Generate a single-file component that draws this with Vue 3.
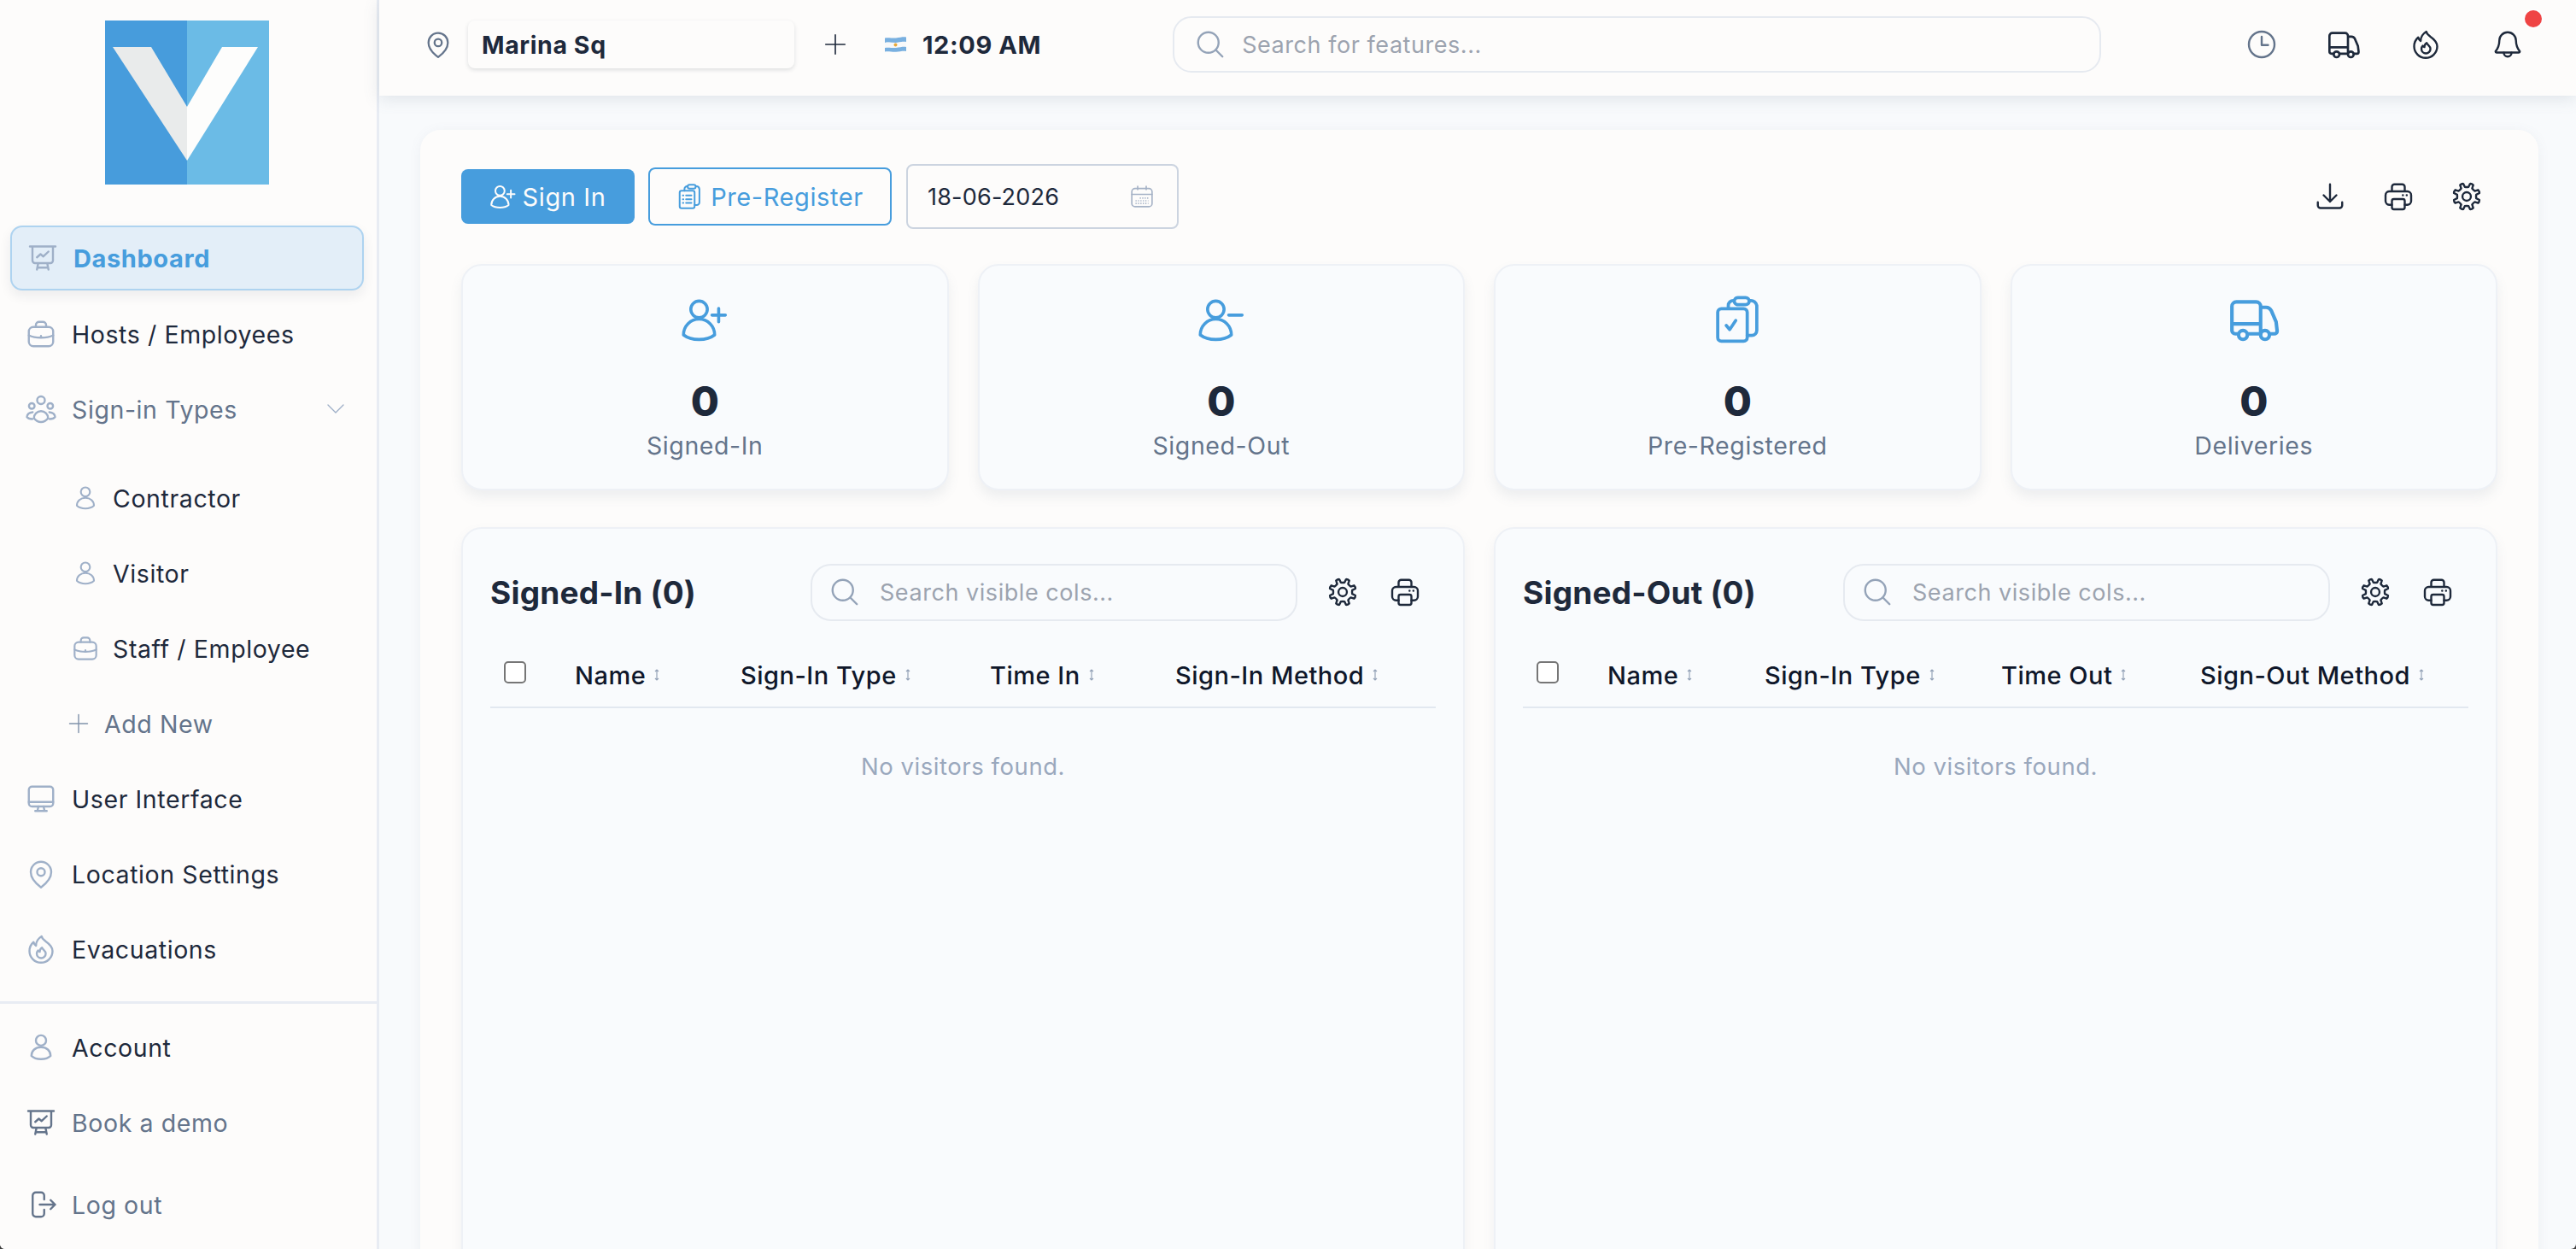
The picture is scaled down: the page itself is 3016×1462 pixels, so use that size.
<template>
  <div class="app">
    <!-- sidebar -->
    <aside class="sidebar">
      <div class="logo-wrap">
        <svg class="logo" viewBox="0 0 192 192">
          <rect width="96" height="192" fill="#479cdc" />
          <rect x="96" width="96" height="192" fill="#6bbbe6" />
          <polygon points="9,31 54,31 96,101 96,164" fill="#e9ebeb" />
          <polygon points="96,101 137,31 179,31 96,164" fill="#fdfdfc" />
        </svg>
      </div>

      <nav class="nav">
        <a class="nav-item active">
          <svg class="ico" viewBox="0 0 24 24" v-html="icons.board"></svg>
          <span>Dashboard</span>
        </a>
        <a class="nav-item">
          <svg class="ico" viewBox="0 0 24 24" v-html="icons.case"></svg>
          <span>Hosts / Employees</span>
        </a>
        <a class="nav-item muted">
          <svg class="ico" viewBox="0 0 24 24" v-html="icons.group"></svg>
          <span>Sign-in Types</span>
          <svg class="chev" viewBox="0 0 24 24" v-html="icons.chevron"></svg>
        </a>

        <div class="sub-list">
          <a v-for="s in subItems" :key="s.label" class="nav-item sub">
            <svg class="ico small" viewBox="0 0 24 24" v-html="icons[s.icon]"></svg>
            <span>{{ s.label }}</span>
          </a>
          <a class="nav-item add-new">
            <svg class="ico small plain" viewBox="0 0 24 24" v-html="icons.plus"></svg>
            <span>Add New</span>
          </a>
        </div>

        <a v-for="n in mainItems" :key="n.label" class="nav-item">
          <svg class="ico" viewBox="0 0 24 24" v-html="icons[n.icon]"></svg>
          <span>{{ n.label }}</span>
        </a>
      </nav>

      <div class="nav-bottom">
        <a class="nav-item">
          <svg class="ico" viewBox="0 0 24 24" v-html="icons.person"></svg>
          <span>Account</span>
        </a>
        <a class="nav-item muted dark-ico">
          <svg class="ico" viewBox="0 0 24 24" v-html="icons.board"></svg>
          <span>Book a demo</span>
        </a>
        <a class="nav-item muted dark-ico logout">
          <svg class="ico" viewBox="0 0 24 24" v-html="icons.logout"></svg>
          <span>Log out</span>
        </a>
      </div>
    </aside>

    <div class="content">
      <!-- top bar -->
      <header class="topbar">
        <svg class="ico pin" viewBox="0 0 24 24" v-html="icons.pin"></svg>
        <div class="loc-select">Marina Sq</div>
        <svg class="ico add" viewBox="0 0 24 24" v-html="icons.plus"></svg>
        <svg class="flag" viewBox="0 0 25 18">
          <path d="M0 1.500C5 .5 8 2 13 1.500S21 0 25 .5V6C21 5.500 17 7 13 7S5 6 0 7z" fill="#79b0e0" />
          <path d="M0 7C5 6 8 7.500 13 7s8-1.500 12-1v6c-4-.5-8 1-12 1.500S5 12 0 13z" fill="#f8f9fa" />
          <path d="M0 13c5-1 8 .5 13 0s8-1.500 12-1v5c-4-.5-8 .5-12 .8S5 17 0 17.500z" fill="#79b0e0" />
          <circle cx="12.500" cy="9.500" r="2" fill="#eaa93a" />
        </svg>
        <span class="clock-text">12:09 AM</span>
        <label class="global-search">
          <svg class="ico" viewBox="0 0 24 24" v-html="icons.search"></svg>
          <input type="text" placeholder="Search for features..." />
        </label>
        <div class="top-actions">
          <button class="icon-btn slate"><svg class="ico" viewBox="0 0 24 24" v-html="icons.clock"></svg></button>
          <button class="icon-btn"><svg class="ico truck" viewBox="0 0 24 24" v-html="icons.truck"></svg></button>
          <button class="icon-btn"><svg class="ico" viewBox="0 0 24 24" v-html="icons.flame"></svg></button>
          <button class="icon-btn bell">
            <svg class="ico" viewBox="0 0 24 24" v-html="icons.bell"></svg>
            <span class="badge"></span>
          </button>
        </div>
      </header>

      <main class="main">
        <section class="card">
          <div class="toolbar">
            <button class="btn primary">
              <svg class="ico" viewBox="0 0 24 24" v-html="icons.personPlus"></svg>
              Sign In
            </button>
            <button class="btn outline">
              <svg class="ico" viewBox="0 0 24 24" v-html="icons.clipList"></svg>
              Pre-Register
            </button>
            <div class="date-field">
              <span>18-06-2026</span>
              <svg class="ico" viewBox="0 0 24 24" v-html="icons.calendar"></svg>
            </div>
            <div class="tool-actions">
              <button class="icon-btn"><svg class="ico" viewBox="0 0 24 24" v-html="icons.download"></svg></button>
              <button class="icon-btn"><svg class="ico" viewBox="0 0 24 24" v-html="icons.printer"></svg></button>
              <button class="icon-btn"><svg class="ico" viewBox="0 0 24 24" v-html="icons.gear"></svg></button>
            </div>
          </div>

          <div class="stats">
            <div v-for="s in stats" :key="s.label" class="stat">
              <svg class="ico" :class="s.icon" viewBox="0 0 24 24" v-html="icons[s.icon]"></svg>
              <div class="stat-num">0</div>
              <div class="stat-label">{{ s.label }}</div>
            </div>
          </div>

          <div class="panels">
            <div v-for="p in panels" :key="p.title" class="panel">
              <div class="panel-head">
                <h2>{{ p.title }}</h2>
                <label class="col-search">
                  <svg class="ico" viewBox="0 0 24 24" v-html="icons.search"></svg>
                  <input type="text" placeholder="Search visible cols..." />
                </label>
                <button class="icon-btn"><svg class="ico" viewBox="0 0 24 24" v-html="icons.gear"></svg></button>
                <button class="icon-btn"><svg class="ico" viewBox="0 0 24 24" v-html="icons.printer"></svg></button>
              </div>
              <div class="thead" :class="p.cols">
                <div class="check-cell"><input type="checkbox" /></div>
                <div v-for="c in p.columns" :key="c" class="th">
                  {{ c }}
                  <svg class="sort" viewBox="0 0 10 16">
                    <path d="M5 2v12M3 4l2-2 2 2M3 12l2 2 2-2" />
                  </svg>
                </div>
              </div>
              <div class="empty">No visitors found.</div>
            </div>
          </div>
        </section>
      </main>
    </div>
  </div>
</template>

<script setup>
// gear outline with 8 rounded teeth
const gearPath = () => {
  const pt = (r, a) => `${(12 + r * Math.cos(a)).toFixed(2)} ${(12 + r * Math.sin(a)).toFixed(2)}`
  let d = ''
  for (let i = 0; i < 8; i++) {
    const a = (i * Math.PI) / 4 + Math.PI / 8
    const next = a + Math.PI / 4
    d += `${i ? 'L' : 'M'}${pt(7.6, a - 0.2)} L${pt(10.3, a - 0.13)} Q${pt(10.8, a)} ${pt(10.3, a + 0.13)} L${pt(7.6, a + 0.2)} `
    d += `Q${pt(7.2, a + Math.PI / 8)} ${pt(7.6, next - 0.2)} `
  }
  return d + 'Z'
}

const personBody = 'M4.500 18.600C4.500 14.500 7.800 11.800 12 11.800s7.500 2.700 7.500 6.800c-1.500 1.500-4.500 2.600-7.500 2.600s-6-1.100-7.500-2.600z'

const icons = {
  board: '<path d="M2 3h20M4 3v11a2 2 0 0 0 2 2h12a2 2 0 0 0 2-2V3M7.500 11.500l2.800-2.500 2.200 1.800 4-3.800M8.500 16l-1 5M15.500 16l1 5M8 19.500h8"/>',
  case: '<rect x="2.500" y="6.500" width="19" height="15" rx="3.500"/><path d="M8 6.500V5a2.500 2.500 0 0 1 2.500-2.500h3A2.500 2.500 0 0 1 16 5v1.500M2.500 13c5 2.500 14 2.500 19 0M12 13.500v.1"/>',
  group: '<circle cx="12" cy="5" r="3"/><circle cx="4.800" cy="9.500" r="2.200"/><circle cx="19.200" cy="9.500" r="2.200"/><path d="M6.500 19c0-3.200 2.500-5.500 5.500-5.500s5.500 2.300 5.500 5.500c-1.500 2-3.500 3-5.500 3s-4-1-5.500-3z"/><path d="M5.500 14.300C3 14.500 1.200 16 1 18c.7 1 2.500 1.600 4.300 1.700M18.500 14.300c2.500.2 4.300 1.700 4.500 3.700-.7 1-2.500 1.600-4.300 1.700"/>',
  chevron: '<path d="M3 7l9 9 9-9"/>',
  person: `<circle cx="12" cy="6.600" r="4"/><path d="${personBody}"/>`,
  plus: '<path d="M12 3v18M3 12h18"/>',
  monitor: '<rect x="2.500" y="2.500" width="19" height="15.500" rx="2.500"/><path d="M2.500 14.500h19M10 18l-.8 3.500M14 18l.8 3.500M7.500 21.500h9"/>',
  pin: '<path d="M12 22.500c-4-3-8-7-8-12a8 8 0 0 1 16 0c0 5-4 9-8 12z"/><circle cx="12" cy="10.500" r="3"/>',
  flame: '<path d="M12.500 2c.2 1.900 1.600 2.700 3 3.800 2.900 2 5.500 4.300 5.500 7.700a9 9 0 0 1-18 0c0-2.900 1.200-5.300 3.200-7 .3 1.300 1 2.200 1.900 2.800C8 6.500 10 3.500 12.500 2z"/><path d="M12.800 10.800c.3 1.400 2.900 2.300 2.900 4.700a3.500 3.500 0 0 1-7 0c0-1.100.4-1.900 1-2.500.3.700.8 1 1.300 1.100-.1-1.300.7-2.500 1.800-3.300z"/>',
  logout: '<path d="M14.500 8V5a2.500 2.500 0 0 0-2.500-2.500H8A2.500 2.500 0 0 0 5.500 5v14A2.500 2.500 0 0 0 8 21.500h4a2.500 2.500 0 0 0 2.500-2.500v-3M11 12h12M19.500 8.500L23 12l-3.500 3.500"/>',
  search: '<circle cx="10.500" cy="10.500" r="8"/><path d="M16.500 16.500l5 5"/>',
  clock: '<circle cx="12" cy="12" r="10"/><path d="M12 6v6.500h5"/>',
  truck: '<path d="M15 18.500H9.200M4.800 18.500H3.500A1.500 1.500 0 0 1 2 17V6a2 2 0 0 1 2-2h9a2 2 0 0 1 2 2v12.500M15 6.500h2.500c1 0 1.800.5 2.300 1.400l2.200 5.100.5 4.200c0 .9-.7 1.300-1.300 1.300h-2M2 14h13"/><circle cx="7" cy="19" r="2"/><circle cx="17" cy="19" r="2"/>',
  bell: '<path d="M12 2.500a6.500 6.500 0 0 0-6.500 6.500c0 4-1 6-3 8.500 0 .5.300.8.800.8h17.400c.5 0 .8-.3.800-.8-2-2.500-3-4.500-3-8.500A6.500 6.500 0 0 0 12 2.500z"/><path d="M9 18.500a3 3 0 0 0 6 0"/>',
  personPlus: '<circle cx="9.100" cy="6.700" r="4.300"/><path d="M1 20c0-4.500 3.500-8.200 8.100-8.200s8.100 3.700 8.100 8.200c-1.900 1.500-5 2.400-8.100 2.400S2.900 21.500 1 20z"/><path d="M19.300 6.200v7M15.800 9.700h7"/>',
  personMinus: '<circle cx="9.100" cy="6.700" r="4.300"/><path d="M1 20c0-4.500 3.500-8.200 8.100-8.200s8.100 3.700 8.100 8.200c-1.900 1.500-5 2.400-8.100 2.400S2.900 21.500 1 20z"/><path d="M15.800 9.700h7"/>',
  clipCheck: '<rect x="2.200" y="6.600" width="14.800" height="16.300" rx="1.800"/><rect x="10.500" y="1" width="7.500" height="3.600" rx="1.800"/><path d="M7.500 6.500V5a2.500 2.500 0 0 1 2.600-2.500M18.500 2.500A3 3 0 0 1 21.800 5v12.500a2.500 2.500 0 0 1-2.500 2.500H17M6.500 15l1.700 2 3-4.500"/>',
  clipList: '<rect x="3" y="6.600" width="14" height="16.300" rx="1.800"/><rect x="10.500" y="1" width="7.500" height="3.600" rx="1.800"/><path d="M7.500 6.500V5a2.500 2.500 0 0 1 2.600-2.500M18.500 2.500A3 3 0 0 1 21.500 5v12.500a2.500 2.500 0 0 1-2.500 2.500H17M6 11h.5M9 11h5M6 14.500h.5M9 14.500h5M6 18h.5M9 18h5"/>',
  calendar: '<rect x="2.500" y="4.500" width="19" height="17" rx="3"/><path d="M2.500 10h19M8 2.500v3M16 2.500v3"/><path d="M10 13.500h8M6 16h12M6 18.500h12" stroke-width="1.300" stroke-dasharray="1 1.300" stroke-linecap="butt"/>',
  download: '<path d="M12 2.500V16M7 11l5 5 5-5M2.500 16.500V19a2 2 0 0 0 2 2h15a2 2 0 0 0 2-2v-2.500"/>',
  printer: '<path d="M7 8V4.500a2 2 0 0 1 2-2h6a2 2 0 0 1 2 2V8M7 18.500H5a3 3 0 0 1-3-3v-4.500a3 3 0 0 1 3-3h14a3 3 0 0 1 3 3v4.500a3 3 0 0 1-3 3h-2M15.500 11h.1M18.500 11h.1"/><rect x="7" y="14" width="10" height="8" rx="1.500"/>',
  gear: `<path d="${gearPath()}"/><circle cx="12" cy="12" r="3.300"/>`
}

const subItems = [
  { label: 'Contractor', icon: 'person' },
  { label: 'Visitor', icon: 'person' },
  { label: 'Staff / Employee', icon: 'case' }
]

const mainItems = [
  { label: 'User Interface', icon: 'monitor' },
  { label: 'Location Settings', icon: 'pin' },
  { label: 'Evacuations', icon: 'flame' }
]

const stats = [
  { label: 'Signed-In', icon: 'personPlus' },
  { label: 'Signed-Out', icon: 'personMinus' },
  { label: 'Pre-Registered', icon: 'clipCheck' },
  { label: 'Deliveries', icon: 'truck' }
]

const panels = [
  { title: 'Signed-In (0)', cols: 'cols-in', columns: ['Name', 'Sign-In Type', 'Time In', 'Sign-In Method'] },
  { title: 'Signed-Out (0)', cols: 'cols-out', columns: ['Name', 'Sign-In Type', 'Time Out', 'Sign-Out Method'] }
]
</script>

<style>
html, body {
  margin: 0;
  background: #3f3f3f;
}
</style>

<style scoped>
.app {
  display: flex;
  width: 100vw;
  height: 100vh;
  overflow: hidden;
  border-radius: 0 0 6px 6px;
  background: #f8fafc;
  color: #1e293b;
  font-family: Inter, "Liberation Sans", sans-serif;
  font-size: 28.500px;
  letter-spacing: 0.6px;
}

.ico {
  width: 36px;
  height: 36px;
  flex-shrink: 0;
  fill: none;
  stroke: currentColor;
  stroke-width: 1.600;
  stroke-linecap: round;
  stroke-linejoin: round;
}

/* Sidebar */
.sidebar {
  width: 444px;
  flex-shrink: 0;
  display: flex;
  flex-direction: column;
  box-sizing: border-box;
  background: #fdfcfb;
  border-right: 3px solid #e8ecf3;
}
.logo-wrap {
  display: flex;
  justify-content: center;
  padding: 24px 0 42px;
}
.logo {
  width: 192px;
  height: 192px;
  display: block;
  margin-right: 3px;
}
.nav {
  flex: 1;
  display: flex;
  flex-direction: column;
}
.nav-item {
  height: 88px;
  flex-shrink: 0;
  box-sizing: border-box;
  display: flex;
  align-items: center;
  gap: 18px;
  padding-left: 30px;
}
.nav-item .ico { color: #9fb0c8; }
.nav-item.active {
  height: 76px;
  margin: 6px 15px 7px 12px;
  padding-left: 18px;
  background: #e3eef8;
  border: 2px solid #aed3f0;
  border-radius: 14px;
  box-shadow: 0 6px 14px rgba(30, 41, 59, 0.08);
  color: #479ddd;
  font-weight: 700;
  font-size: 29px;
}
.nav-item.muted { color: #64748b; }
.nav-item.dark-ico .ico { color: #64748b; }
.chev {
  width: 24px;
  height: 24px;
  margin-left: auto;
  margin-right: 36px;
  fill: none;
  stroke: #9fb0c8;
  stroke-width: 1.400;
  stroke-linecap: round;
  stroke-linejoin: round;
}
.sub-list {
  padding-top: 16px;
}
.nav-item.sub {
  padding-left: 84px;
  gap: 16px;
}
.ico.small {
  width: 32px;
  height: 32px;
}
.nav-item.add-new {
  padding-left: 78px;
  gap: 16px;
  color: #64748b;
}
.nav-item.add-new .ico {
  width: 28px;
  height: 28px;
  color: #8092ab;
  stroke-width: 1.200;
}
.nav-bottom {
  flex-shrink: 0;
  border-top: 3px solid #e8ecf3;
  padding: 7px 0 8px;
}
.nav-bottom .nav-item {
  height: 88px;
}
.nav-item.logout { margin-top: 8px; }

/* Top bar */
.content {
  flex: 1;
  min-width: 0;
  display: flex;
  flex-direction: column;
}
.topbar {
  height: 112px;
  flex-shrink: 0;
  display: flex;
  align-items: center;
  box-sizing: border-box;
  padding: 0 32px 8px 52px;
  background: #fdfcfb;
  box-shadow: 0 4px 18px rgba(100, 116, 139, 0.16);
  position: relative;
}
.pin {
  color: #64748b;
  width: 34px;
  height: 34px;
}
.loc-select {
  width: 382px;
  height: 56px;
  margin-left: 18px;
  box-sizing: border-box;
  display: flex;
  align-items: center;
  padding-left: 16px;
  background: #fdfcfb;
  border-radius: 8px;
  box-shadow: 0 2px 5px rgba(30, 41, 59, 0.14);
  font-weight: 700;
}
.add {
  width: 30px;
  height: 30px;
  margin-left: 33px;
  stroke-width: 1.300;
}
.flag {
  width: 25px;
  height: 18px;
  margin-left: 43px;
}
.clock-text {
  margin-left: 19px;
  font-weight: 700;
  font-size: 29px;
  white-space: nowrap;
}
.global-search {
  width: 1087px;
  height: 66px;
  margin-left: 154px;
  box-sizing: border-box;
  display: flex;
  align-items: center;
  gap: 17px;
  padding-left: 24px;
  font-size: 27px;
  letter-spacing: 0.55px;
  background: #fdfcfb;
  border: 2px solid #e6eaf0;
  border-radius: 22px;
}
.global-search .ico { color: #94a3b8; }
input[type="text"] {
  flex: 1;
  min-width: 0;
  border: none;
  outline: none;
  background: transparent;
  font: inherit;
  letter-spacing: inherit;
  color: #1e293b;
}
input[type="text"]::placeholder { color: #9ca3af; opacity: 1; }
.top-actions {
  margin-left: auto;
  display: flex;
}
.icon-btn {
  width: 96px;
  height: 48px;
  padding: 0;
  border: none;
  background: none;
  color: #1e293b;
  display: flex;
  align-items: center;
  justify-content: center;
  position: relative;
}
.icon-btn.slate { color: #64748b; }
.ico.truck { width: 40px; height: 40px; }
.badge {
  position: absolute;
  top: -16px;
  right: 8px;
  width: 20px;
  height: 20px;
  background: #ef4444;
  border-radius: 50%;
  box-shadow: 0 0 0 2px #fdfdfe;
}

/* Main */
.main {
  flex: 1;
  min-height: 0;
  padding: 40px 44px 0 48px;
}
.card {
  box-sizing: border-box;
  min-height: 1400px;
  padding: 40px 48px;
  background: #fdfcfb;
  border-radius: 24px;
  box-shadow: 0 2px 14px rgba(100, 116, 139, 0.08);
}
.toolbar {
  height: 76px;
  display: flex;
  align-items: center;
}
.btn {
  box-sizing: border-box;
  display: flex;
  align-items: center;
  justify-content: center;
  font: inherit;
  letter-spacing: inherit;
  border-radius: 8px;
}
.btn.primary {
  width: 203px;
  height: 64px;
  gap: 8px;
  background: #479ddd;
  border: none;
  color: #fdfcfb;
  font-size: 29px;
}
.btn.primary .ico { width: 30px; height: 30px; }
.btn.outline {
  width: 285px;
  height: 68px;
  margin-left: 16px;
  gap: 10px;
  background: #fdfcfb;
  border: 2px solid #479ddd;
  color: #479ddd;
  font-size: 29px;
}
.btn.outline .ico { width: 30px; height: 30px; }
.date-field {
  width: 319px;
  height: 76px;
  margin-left: 17px;
  box-sizing: border-box;
  display: flex;
  align-items: center;
  justify-content: space-between;
  padding: 0 26px 0 23px;
  border: 2px solid #ccd4e0;
  border-radius: 8px;
  font-size: 27px;
  letter-spacing: 0.2px;
}
.date-field .ico { width: 30px; height: 30px; color: #a5b2c6; stroke-width: 1.300; }
.tool-actions {
  margin-left: auto;
  display: flex;
  gap: 0;
  margin-right: -4px;
}
.tool-actions .icon-btn { width: 80px; }

.stats {
  display: grid;
  grid-template-columns: repeat(4, 1fr);
  gap: 34px;
  margin-top: 41px;
}
.stat {
  height: 265px;
  box-sizing: border-box;
  display: flex;
  flex-direction: column;
  align-items: center;
  padding-top: 35px;
  background: #f9fbfd;
  border: 2px solid #eef1f6;
  border-radius: 24px;
  box-shadow: 0 8px 14px rgba(100, 116, 139, 0.1);
}
.stat .ico {
  width: 56px;
  height: 56px;
  color: #479ddd;
  stroke-width: 1.600;
}
.stat .ico.personPlus, .stat .ico.personMinus {
  width: 54px;
  height: 54px;
  margin: 1px 0;
}
.stat .ico.truck {
  width: 62px;
  height: 62px;
  margin: -3px 0;
}
.stat-num {
  margin-top: 44px;
  font-size: 48px;
  line-height: 48px;
  font-weight: 800;
  letter-spacing: 0;
}
.stat-label {
  margin-top: 10px;
  line-height: 36px;
  color: #64748b;
}

.panels {
  display: grid;
  grid-template-columns: 1fr 1fr;
  gap: 34px;
  margin-top: 43px;
}
.panel {
  min-height: 1000px;
  box-sizing: border-box;
  padding: 40px 32px 0;
  background: #f9fbfd;
  border: 2px solid #eef1f6;
  border-radius: 24px;
  box-shadow: 0 6px 14px rgba(100, 116, 139, 0.08);
}
.panel-head {
  display: flex;
  align-items: center;
  height: 68px;
}
.panel-head h2 {
  margin: 0;
  font-size: 37px;
  font-weight: 700;
  letter-spacing: 0.2px;
}
.col-search {
  width: 570px;
  height: 67px;
  margin-left: auto;
  margin-right: 16px;
  box-sizing: border-box;
  display: flex;
  align-items: center;
  gap: 21px;
  padding-left: 20px;
  font-size: 27px;
  letter-spacing: 0.55px;
  border: 2px solid #e6eaf0;
  border-radius: 24px;
}
.col-search .ico { color: #94a3b8; }
.panel-head .icon-btn {
  width: 73px;
}
.thead {
  display: grid;
  align-items: center;
  height: 74px;
  margin-top: 26px;
  border-bottom: 2px solid #e2e8f0;
  font-size: 29px;
  font-weight: 500;
  letter-spacing: 0.5px;
  color: #0f172a;
}
.cols-in { grid-template-columns: 99px 194px 292px 217px 1fr; }
.cols-out { grid-template-columns: 99px 184px 277px 233px 1fr; }
.check-cell {
  padding-left: 16px;
  display: flex;
  margin-top: -6px;
}
.check-cell input {
  appearance: none;
  width: 26px;
  height: 26px;
  margin: 0;
  background: #fff;
  border: 2px solid #767676;
  border-radius: 5px;
}
.th {
  display: flex;
  align-items: center;
  gap: 8px;
  white-space: nowrap;
}
.sort {
  width: 10px;
  height: 16px;
  fill: none;
  stroke: #94a3b8;
  stroke-width: 1.200;
}
.empty {
  padding-top: 50px;
  text-align: center;
  font-size: 27.500px;
  letter-spacing: 0.55px;
  line-height: 36px;
  color: #9aa8bd;
}
</style>
